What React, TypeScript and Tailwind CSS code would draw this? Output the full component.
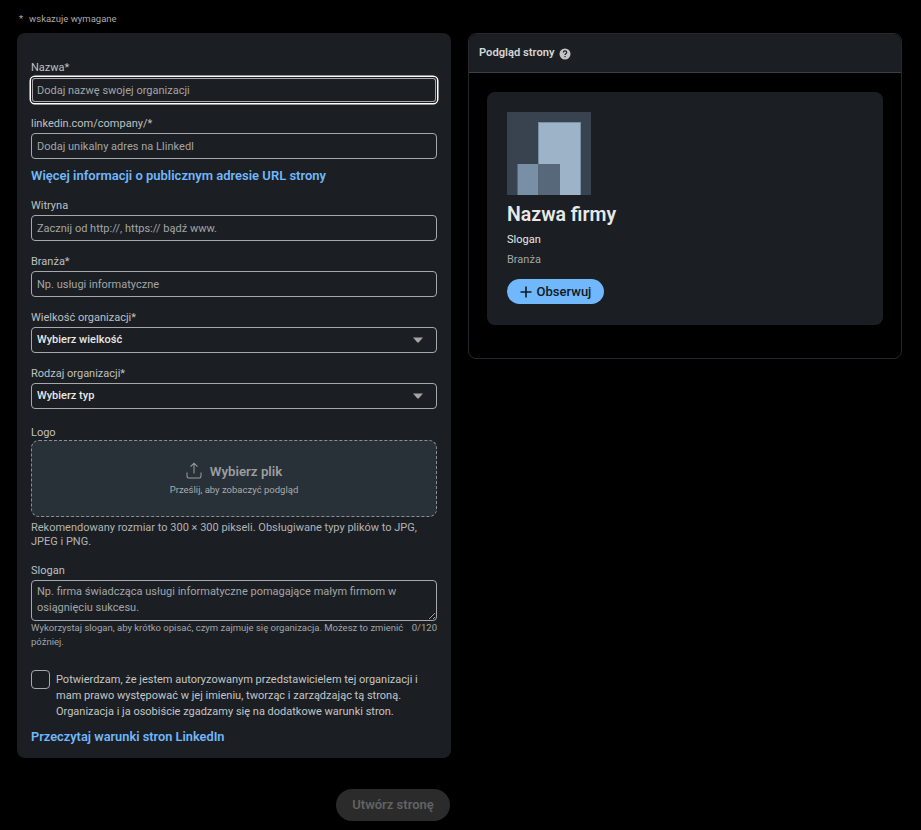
import React from "react";

const inputCls =
  "block w-full h-[26px] rounded-[4px] border border-[#a6a8aa] bg-transparent px-[5px] text-[11px] text-[#e8e8e8] placeholder:text-[#a3a5a7] outline-none";

function Label({ children }: { children: React.ReactNode }) {
  return <div className="h-[18px] text-[11px] leading-[18px] text-[#bfc0c1]">{children}</div>;
}

function Field({ label, placeholder }: { label: string; placeholder: string }) {
  return (
    <div className="mb-[12px]">
      <Label>{label}</Label>
      <input className={inputCls} placeholder={placeholder} />
    </div>
  );
}

function SelectField({ label, value }: { label: string; value: string }) {
  return (
    <div className="mb-[12px]">
      <Label>{label}</Label>
      <div className="flex h-[26px] items-center justify-between rounded-[4px] border border-[#a6a8aa] pl-[5px] pr-[13px] text-[11px] font-medium text-[#e8e8e8]">
        <span>{value}</span>
        <svg width="10" height="6" viewBox="0 0 10 6" className="fill-[#a3a5a7]">
          <path d="M0 0.5h10L5.6 5.5h-1.2z" />
        </svg>
      </div>
    </div>
  );
}

export default function App() {
  return (
    <div className="h-[830px] w-[921px] overflow-hidden bg-black pl-[17px] text-[#e8e8e8] [font-family:'Roboto','Noto_Sans',sans-serif]">
      <div className="flex h-[33px] items-start pt-[12px] text-[9.5px] leading-[13px] text-[#a9aaab]">
        <span className="ml-[2px] mr-[6px]">*</span>
        <span>wskazuje wymagane</span>
      </div>
      <div className="flex items-start gap-[17px]">
        <div className="w-[434px]">
          <div className="h-[725px] rounded-[8px] bg-[#1b1f23] px-[14px] pt-[26px]">
            <div className="mb-[12px]">
              <Label>Nazwa*</Label>
              <input
                className="block h-[26px] w-full rounded-[4px] bg-transparent px-[6px] text-[11px] placeholder:text-[#a3a5a7] outline-none shadow-[0_0_0_1.5px_#ffffff,inset_0_0_0_1px_#1b1f23,inset_0_0_0_2px_#a6a8aa]"
                placeholder="Dodaj nazwę swojej organizacji"
              />
            </div>
            <Label>linkedin.com/company/*</Label>
            <input className={inputCls} placeholder="Dodaj unikalny adres na LIinkedI" />
            <div className="mb-[10px] mt-[6px] h-[22px] text-[13px] font-semibold leading-[22px] text-[#71b7fb]">
              Więcej informacji o publicznym adresie URL strony
            </div>
            <Field label="Witryna" placeholder="Zacznij od http://, https:// bądź www." />
            <Field label="Branża*" placeholder="Np. usługi informatyczne" />
            <SelectField label="Wielkość organizacji*" value="Wybierz wielkość" />
            <SelectField label="Rodzaj organizacji*" value="Wybierz typ" />
            <div className="mt-[15px] h-[16px] text-[11px] leading-[17px] text-[#bfc0c1]">Logo</div>
            <div className="flex h-[77px] flex-col items-center justify-center rounded-[8px] border border-dashed border-[#8c8f91] bg-[#293138]">
              <div className="flex h-[21px] items-center gap-[8px] text-[#9b9d9f]">
                <svg width="16" height="17" viewBox="0 0 16 17" fill="currentColor" className="mb-[3px]">
                  <path d="M7.5 2.4 4.9 5l-.7-.7L8 .5l3.8 3.8-.7.7-2.6-2.6V11.5h-1zM.5 10.5h1v3.5a1.5 1.5 0 0 0 1.5 1.5h10a1.5 1.5 0 0 0 1.5-1.5v-3.5h1V14a2.5 2.5 0 0 1-2.5 2.5H3A2.5 2.5 0 0 1 .5 14z" />
                </svg>
                <span className="text-[13.3px] font-semibold">Wybierz plik</span>
              </div>
              <div className="mt-[1px] text-[9.5px] leading-[13px] text-[#a9aaab]">Prześlij, aby zobaczyć podgląd</div>
            </div>
            <div className="mt-[4px] h-[28px] text-[11px] leading-[14px] text-[#b2b3b4]">
              Rekomendowany rozmiar to 300 × 300 pikseli. Obsługiwane typy plików to JPG,
              <br />
              JPEG i PNG.
            </div>
            <div className="mt-[13px] h-[18px] text-[11px] leading-[18px] text-[#bfc0c1]">Slogan</div>
            <textarea
              className="block h-[41px] w-full rounded-[4px] border border-[#a6a8aa] bg-transparent px-[5px] py-[3px] text-[11px] leading-[16px] placeholder:text-[#a3a5a7] outline-none"
              placeholder="Np. firma świadcząca usługi informatyczne pomagające małym firmom w osiągnięciu sukcesu."
            />
            <div className="flex justify-between text-[9.5px] leading-[14px] text-[#a3a5a7]">
              <span className="w-[378px]">
                Wykorzystaj slogan, aby krótko opisać, czym zajmuje się organizacja. Możesz to zmienić później.
              </span>
              <span>0/120</span>
            </div>
            <div className="mt-[21px] flex items-start gap-[6px]">
              <div className="size-[19px] shrink-0 rounded-[4px] border border-[#a6a8aa]" />
              <div className="mt-[2px] text-[11px] leading-[16px] text-[#c4c5c6]">
                Potwierdzam, że jestem autoryzowanym przedstawicielem tej organizacji i mam prawo występować w jej imieniu, tworząc i zarządzając tą stroną. Organizacja i ja osobiście zgadzamy się na dodatkowe warunki stron.
              </div>
            </div>
            <div className="mt-[8px] text-[12.8px] font-semibold leading-[18px] text-[#71b7fb]">
              Przeczytaj warunki stron LinkedIn
            </div>
          </div>
          <div className="mt-[31px] flex justify-end pr-[1px]">
            <div className="flex h-[32px] w-[114px] items-center justify-center rounded-full bg-[#2b2b2b] text-[13px] font-semibold text-[#626262]">
              Utwórz stronę
            </div>
          </div>
        </div>

        <div className="h-[326px] w-[434px] rounded-[8px] border border-[#24282c]">
          <div className="flex h-[39px] items-center gap-[4px] rounded-t-[8px] border-b border-[#3b4045] bg-[#1b1f23] pl-[10px] text-[11.2px] font-semibold text-[#d5d6d6]">
            <span>Podgląd strony</span>
            <svg width="12" height="12" viewBox="0 0 12 12" className="mt-[1px]">
              <circle cx="6" cy="6" r="5.5" fill="#c4c5c6" />
              <path d="M4.3 4.6a1.7 1.7 0 0 1 3.4 0c0 1.2-1.7 1.2-1.7 2.5" fill="none" stroke="#1b1f23" strokeWidth="1.2" />
              <rect x="5.4" y="8" width="1.2" height="1.2" fill="#1b1f23" />
            </svg>
          </div>
          <div className="p-[18px] pt-[19px]">
            <div className="h-[233px] rounded-[8px] bg-[#1b1f23] pl-[20px] pt-[20px]">
              <svg width="84" height="83" viewBox="0 0 84 83" className="block">
                <rect width="84" height="83" fill="#38434f" />
                <rect x="31" y="10" width="43" height="73" fill="#788fa5" />
                <rect x="32" y="11" width="41" height="72" fill="#9db3c8" />
                <rect x="10" y="52" width="22" height="31" fill="#56687a" />
                <rect x="11" y="52" width="20" height="31" fill="#788fa5" />
                <rect x="31" y="52" width="22" height="31" fill="#56687a" />
              </svg>
              <div className="mt-[7px] text-[19.5px] font-semibold leading-[26px] text-[#e8e8e8]">Nazwa firmy</div>
              <div className="mt-[4px] text-[11px] leading-[16px] text-[#e8e8e8]">Slogan</div>
              <div className="mt-[4px] text-[11px] leading-[16px] text-[#a3a5a7]">Branża</div>
              <div className="mt-[11px] flex h-[25px] w-[97px] items-center justify-center gap-[5px] rounded-full bg-[#71b7fb] text-[13px] font-medium text-[#0f1a24]">
                <svg width="12" height="12" viewBox="0 0 12 12" fill="#0f1a24">
                  <path d="M6.8 .5H5.2v4.7H.5v1.6h4.7v4.7h1.6V6.8h4.7V5.2H6.8z" />
                </svg>
                <span>Obserwuj</span>
              </div>
            </div>
          </div>
        </div>
      </div>
    </div>
  );
}
